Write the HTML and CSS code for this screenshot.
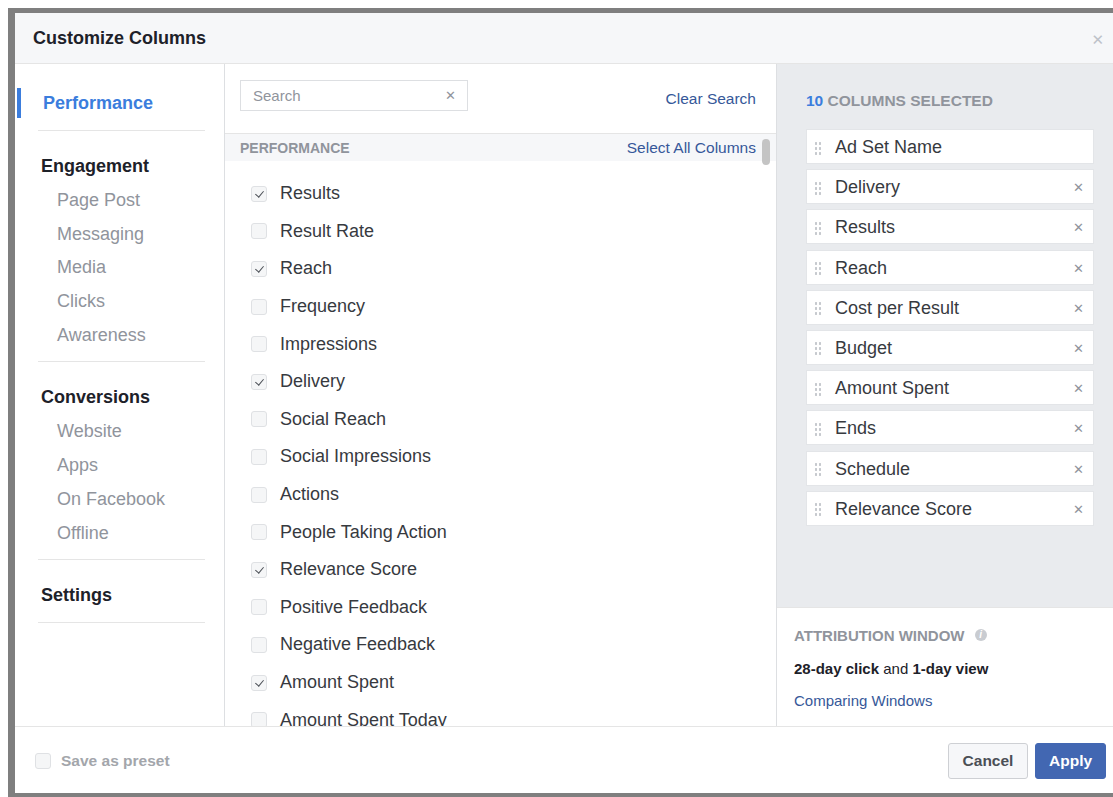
FILE: index.html
```html
<!DOCTYPE html>
<html lang="en">
<head>
<meta charset="utf-8">
<title>Customize Columns</title>
<link rel="stylesheet" href="styles.css">
</head>
<body>
<div class="backdrop">
  <div class="dialog">
    <header class="dialog-head">
      <h1 class="dialog-title">Customize Columns</h1>
      <span class="close">&#x2715;</span>
    </header>

    <div class="dialog-body">
      <nav class="nav">
        <div class="nav-top">
          <div class="nav-item active">Performance</div>
        </div>
        <div class="nav-group">
          <div class="nav-heading">Engagement</div>
          <div class="nav-sub">Page Post</div>
          <div class="nav-sub">Messaging</div>
          <div class="nav-sub">Media</div>
          <div class="nav-sub">Clicks</div>
          <div class="nav-sub">Awareness</div>
        </div>
        <div class="nav-group">
          <div class="nav-heading">Conversions</div>
          <div class="nav-sub">Website</div>
          <div class="nav-sub">Apps</div>
          <div class="nav-sub">On Facebook</div>
          <div class="nav-sub">Offline</div>
        </div>
        <div class="nav-group">
          <div class="nav-heading">Settings</div>
        </div>
      </nav>

      <section class="columns">
        <div class="search-row">
          <div class="search-box">
            <span class="search-placeholder">Search</span>
            <span class="search-clear">&#x2715;</span>
          </div>
          <a class="link">Clear Search</a>
        </div>
        <div class="results">
          <div class="section-head">
            <span class="section-title">PERFORMANCE</span>
            <a class="link">Select All Columns</a>
          </div>
          <ul class="check-list">
            <li class="check-row"><span class="box checked"></span>Results</li>
            <li class="check-row"><span class="box"></span>Result Rate</li>
            <li class="check-row"><span class="box checked"></span>Reach</li>
            <li class="check-row"><span class="box"></span>Frequency</li>
            <li class="check-row"><span class="box"></span>Impressions</li>
            <li class="check-row"><span class="box checked"></span>Delivery</li>
            <li class="check-row"><span class="box"></span>Social Reach</li>
            <li class="check-row"><span class="box"></span>Social Impressions</li>
            <li class="check-row"><span class="box"></span>Actions</li>
            <li class="check-row"><span class="box"></span>People Taking Action</li>
            <li class="check-row"><span class="box checked"></span>Relevance Score</li>
            <li class="check-row"><span class="box"></span>Positive Feedback</li>
            <li class="check-row"><span class="box"></span>Negative Feedback</li>
            <li class="check-row"><span class="box checked"></span>Amount Spent</li>
            <li class="check-row"><span class="box"></span>Amount Spent Today</li>
          </ul>
          <div class="scroll-thumb"></div>
        </div>
      </section>

      <aside class="selected-panel">
        <div class="selected">
          <div class="selected-title"><span class="count">10</span> COLUMNS SELECTED</div>
          <ul class="selected-list">
            <li class="chip"><span class="grip"></span><span class="chip-label">Ad Set Name</span></li>
            <li class="chip"><span class="grip"></span><span class="chip-label">Delivery</span><span class="chip-x">&#x2715;</span></li>
            <li class="chip"><span class="grip"></span><span class="chip-label">Results</span><span class="chip-x">&#x2715;</span></li>
            <li class="chip"><span class="grip"></span><span class="chip-label">Reach</span><span class="chip-x">&#x2715;</span></li>
            <li class="chip"><span class="grip"></span><span class="chip-label">Cost per Result</span><span class="chip-x">&#x2715;</span></li>
            <li class="chip"><span class="grip"></span><span class="chip-label">Budget</span><span class="chip-x">&#x2715;</span></li>
            <li class="chip"><span class="grip"></span><span class="chip-label">Amount Spent</span><span class="chip-x">&#x2715;</span></li>
            <li class="chip"><span class="grip"></span><span class="chip-label">Ends</span><span class="chip-x">&#x2715;</span></li>
            <li class="chip"><span class="grip"></span><span class="chip-label">Schedule</span><span class="chip-x">&#x2715;</span></li>
            <li class="chip"><span class="grip"></span><span class="chip-label">Relevance Score</span><span class="chip-x">&#x2715;</span></li>
          </ul>
        </div>
        <div class="attribution">
          <div class="attr-title">ATTRIBUTION WINDOW <span class="info">i</span></div>
          <div class="attr-value"><b>28-day click</b> and <b>1-day view</b></div>
          <a class="link small">Comparing Windows</a>
        </div>
      </aside>
    </div>

    <footer class="dialog-foot">
      <label class="preset"><span class="box"></span>Save as preset</label>
      <div class="actions">
        <button class="btn">Cancel</button>
        <button class="btn primary">Apply</button>
      </div>
    </footer>
  </div>
</div>
</body>
</html>
```

FILE: styles.css
```css
* { box-sizing: border-box; }

html, body {
  margin: 0;
  padding: 0;
  background: #fff;
  width: 1113px;
  height: 797px;
  overflow: hidden;
  font-family: "Liberation Sans", Arial, sans-serif;
  color: #1d2129;
}

.backdrop {
  margin: 8px 0 0 8px;
  height: 789px;
  border-top: 5px solid #7f7f7f;
  border-left: 7px solid #7f7f7f;
  border-bottom: 4px solid #7f7f7f;
}

.dialog {
  height: 780px;
  background: #fff;
  display: flex;
  flex-direction: column;
}

/* header */
.dialog-head {
  height: 51px;
  flex: none;
  background: #f6f7f9;
  border-bottom: 1px solid #e5e5e5;
  display: flex;
  align-items: center;
  justify-content: space-between;
  padding: 0 9px 0 18px;
}
.dialog-title {
  margin: 0;
  font-size: 18px;
  font-weight: bold;
  color: #1d2129;
}
.close {
  color: #bec2c9;
  font-size: 15px;
  font-family: "DejaVu Sans", sans-serif;
  position: relative;
  top: 2px;
}

/* body */
.dialog-body {
  flex: 1;
  display: grid;
  grid-template-columns: 209px 552px 1fr;
  min-height: 0;
}

/* left nav */
.nav {
  padding-top: 24px;
}
.nav-top {
  padding-bottom: 13px;
  margin-right: 19px;
  position: relative;
}
.nav-top::after {
  content: "";
  position: absolute;
  left: 23px;
  right: 0;
  bottom: 0;
  border-bottom: 1px solid #e5e5e5;
}
.nav-item {
  height: 30px;
  line-height: 31px;
  font-size: 18px;
  font-weight: bold;
  padding-left: 22px;
  border-left: 4px solid transparent;
}
.nav-item.active {
  color: #3b7ddd;
  border-left-color: #3b7ddd;
  margin-left: 2px;
}
.nav-group {
  margin: 0 19px 0 23px;
  padding: 18px 0 10px;
  border-bottom: 1px solid #e5e5e5;
}
.nav-heading {
  height: 34px;
  line-height: 35px;
  font-size: 18px;
  font-weight: bold;
  color: #1d2129;
  padding-left: 3px;
}
.nav-sub {
  height: 33.7px;
  line-height: 35px;
  font-size: 18px;
  color: #90949c;
  padding-left: 19px;
}

/* middle column */
.columns {
  border-left: 1px solid #dddfe2;
  display: flex;
  flex-direction: column;
  min-height: 0;
}
.search-row {
  height: 69px;
  flex: none;
  display: flex;
  align-items: flex-start;
  justify-content: space-between;
  padding: 16px 20px 0 15px;
}
.search-box {
  width: 228px;
  height: 31px;
  border: 1px solid #dddfe2;
  background: #fff;
  display: flex;
  align-items: center;
  justify-content: space-between;
  padding: 0 11px 0 12px;
}
.search-placeholder {
  font-size: 15px;
  color: #90949c;
}
.search-clear {
  font-family: "DejaVu Sans", sans-serif;
  font-size: 13px;
  color: #90949c;
}
.link {
  color: #365899;
  font-size: 15.5px;
  cursor: pointer;
}
.search-row .link { padding-top: 10px; }

.results {
  flex: 1;
  position: relative;
  display: flex;
  flex-direction: column;
  min-height: 0;
}
.section-head {
  height: 28px;
  flex: none;
  background: #f6f7f9;
  border-top: 1px solid #e5e5e5;
  display: flex;
  align-items: center;
  justify-content: space-between;
  padding: 0 20px 0 15px;
}
.section-title {
  font-size: 14px;
  font-weight: bold;
  color: #90949c;
}
.scroll-thumb {
  position: absolute;
  top: 6px;
  right: 6px;
  width: 8px;
  height: 26px;
  border-radius: 4px;
  background: #c4c4c4;
}
.check-list {
  list-style: none;
  margin: 0;
  padding: 14px 0 0 26px;
  flex: 1;
  overflow: hidden;
}
.check-row {
  height: 37.6px;
  display: flex;
  align-items: center;
  font-size: 18px;
  color: #373a3f;
}
.box {
  width: 16px;
  height: 16px;
  flex: none;
  border: 1px solid #dfe1e4;
  border-radius: 3px;
  background: #f5f6f7;
  margin-right: 13px;
  position: relative;
}
.box.checked::after {
  content: "";
  position: absolute;
  left: 4.5px;
  top: 2px;
  width: 4px;
  height: 7px;
  border: solid #4b4f56;
  border-width: 0 1.8px 1.8px 0;
  transform: rotate(40deg);
}

/* right panel */
.selected-panel {
  background: #e9ebee;
  border-left: 1px solid #dddfe2;
  display: flex;
  flex-direction: column;
  min-height: 0;
}
.selected {
  flex: 1;
  padding: 28px 19px 0 29px;
}
.selected-title {
  font-size: 15.5px;
  font-weight: bold;
  color: #90949c;
  height: 18px;
  line-height: 18px;
}
.count { color: #3b7ddd; }
.selected-list {
  list-style: none;
  margin: 19px 0 0;
  padding: 0;
  display: flex;
  flex-direction: column;
  gap: 5.2px;
}
.chip {
  height: 35px;
  background: #fff;
  border: 1px solid #e3e5e8;
  display: flex;
  align-items: center;
  padding: 2px 9px 0 7px;
  font-size: 18px;
  color: #373a3f;
}
.grip {
  width: 8px;
  height: 14px;
  flex: none;
  margin-right: 13px;
  background-image: radial-gradient(circle, #c6c9ce 1.1px, transparent 1.3px);
  background-size: 4px 5px;
  background-position: 0 0;
}
.chip-label { flex: 1; }
.chip-x {
  font-family: "DejaVu Sans", sans-serif;
  font-size: 13px;
  color: #90949c;
}

.attribution {
  height: 119px;
  flex: none;
  background: #fff;
  border-top: 1px solid #e5e5e5;
  padding: 18px 0 0 17px;
}
.attr-title {
  font-size: 15px;
  font-weight: bold;
  color: #90949c;
  display: flex;
  align-items: center;
  height: 18px;
}
.info {
  display: inline-block;
  width: 12px;
  height: 12px;
  border-radius: 50%;
  background: #c9ccd1;
  color: #fff;
  font-size: 10px;
  font-style: italic;
  text-align: center;
  line-height: 12px;
  margin-left: 10px;
}
.attr-value {
  margin-top: 16px;
  font-size: 15px;
  color: #1d2129;
}
.attr-value b { font-weight: bold; }
.link.small {
  display: block;
  margin-top: 15px;
  font-size: 15px;
}

/* footer */
.dialog-foot {
  height: 67px;
  flex: none;
  border-top: 1px solid #e5e5e5;
  display: flex;
  align-items: center;
  justify-content: space-between;
  padding: 2px 7px 0 20px;
}
.preset {
  display: flex;
  align-items: center;
  font-size: 15.5px;
  font-weight: bold;
  color: #a3a6ab;
}
.preset .box { margin-right: 10px; }
.actions {
  display: flex;
  gap: 7px;
}
.btn {
  height: 36px;
  font-family: "Liberation Sans", Arial, sans-serif;
  font-size: 15.5px;
  font-weight: bold;
  border-radius: 3px;
  border: 1px solid #ced0d4;
  background: #f6f7f9;
  color: #4b4f56;
  padding: 0 13px;
}
.btn:first-child { width: 80px; }
.btn.primary {
  width: 71px;
  background: #4267b2;
  border-color: #4267b2;
  color: #fff;
}
```
